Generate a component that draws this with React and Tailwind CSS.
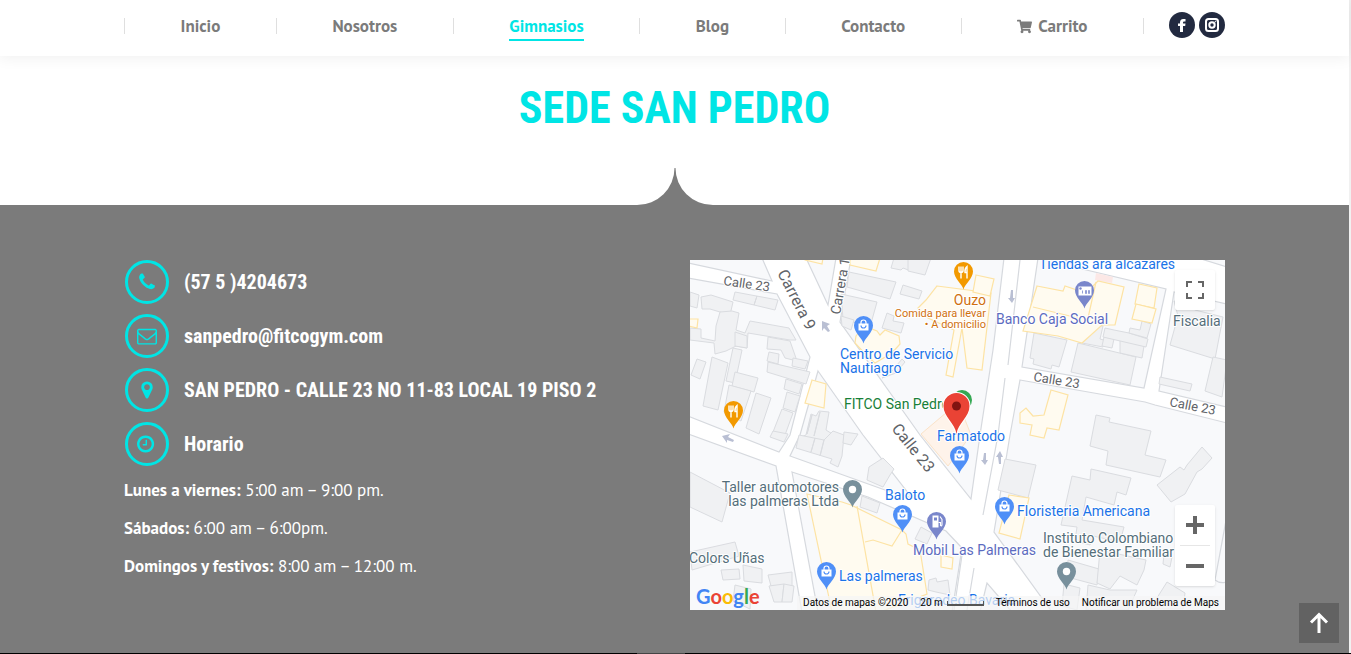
import React from "react";
import { FaShoppingCart } from "react-icons/fa";

const NAV = ["Inicio", "Nosotros", "Gimnasios", "Blog", "Contacto", "Carrito"];

const ICONS = {
  phone:
    "M1600 1240q0 27-10 70.500t-21 68.500q-21 50-122 106-94 51-186 51-27 0-53-3.500t-57.500-12.500-47-14.500-55.500-20.500-49-18q-98-35-175-83-127-79-264-216t-216-264q-48-77-83-175-3-9-18-49t-20.500-55.500-14.500-47-12.500-57.500-3.500-53q0-92 51-186 56-101 106-122 25-11 68.500-21t70.500-10q14 0 21 3 18 6 53 76 11 19 30 54t35 63.500 31 53.500q3 4 17.500 25t21.500 35.500 7 28.500q0 20-28.500 50t-62 55-62 53-28.500 46q0 9 5 22.500t8.500 20.500 14 24 11.500 19q76 137 174 235t235 174q2 1 19 11.500t24 14 20.500 8.500 22.500 5q18 0 46-28.500t53-62 55-62 50-28.500q14 0 28.500 7t35.500 21.500 25 17.500q25 15 53.500 31t63.500 35 54 30q70 35 76 53 3 7 3 21z",
  mail:
    "M1664 1504v-768q-32 36-69 66-268 206-426 338-51 43-83 67t-86.500 48.500-102.500 24.500h-2q-48 0-102.500-24.500t-86.500-48.500-83-67q-158-132-426-338-37-30-69-66v768q0 13 9.500 22.500t22.500 9.500h1472q13 0 22.500-9.500t9.500-22.500zm0-1051v-24.500l-.5-13-3-12.500-5.500-9-9-7.500-14-2.500h-1472q-13 0-22.500 9.500t-9.500 22.500q0 168 147 284 193 152 401 317 6 5 35 29.500t46 37.500 44.500 31.500 50.500 27.500 43 9h2q20 0 43-9t50.500-27.500 44.500-31.500 46-37.500 35-29.500q208-165 401-317 54-43 100.500-115.500t46.500-131.500zm128-37v1088q0 66-47 113t-113 47h-1472q-66 0-113-47t-47-113v-1088q0-66 47-113t113-47h1472q66 0 113 47t47 113z",
  marker:
    "M1152 640q0-106-75-181t-181-75-181 75-75 181 75 181 181 75 181-75 75-181zm256 0q0 109-33 179l-364 774q-16 33-47.500 52t-67.500 19-67.500-19-46.500-52l-365-774q-33-70-33-179 0-212 150-362t362-150 362 150 150 362z",
  clock:
    "M1024 544v448q0 14-9 23t-23 9h-320q-14 0-23-9t-9-23v-64q0-14 9-23t23-9h224v-352q0-14 9-23t23-9h64q14 0 23 9t9 23zm416 352q0-148-73-273t-198-198-273-73-273 73-198 198-73 273 73 273 198 198 273 73 273-73 198-198 73-273zm224 0q0 209-103 385.500t-279.500 279.500-385.500 103-385.500-103-279.500-279.500-103-385.500 103-385.500 279.500-279.500 385.500-103 385.500 103 279.500 279.500 103 385.500z",
};

const CONTACT = [
  ["phone", "(57 5 )4204673"],
  ["mail", "sanpedro@fitcogym.com"],
  ["marker", "SAN PEDRO - CALLE 23 NO 11-83 LOCAL 19 PISO 2"],
  ["clock", "Horario"],
];

const HOURS = [
  ["Lunes a viernes:", "5:00 am – 9:00 pm."],
  ["Sábados:", "6:00 am – 6:00pm."],
  ["Domingos y festivos:", "8:00 am – 12:00 m."],
];

// City blocks; the white base between them forms the streets.
const BLOCKS = [
  "-2,-2 -2,3 82,21 72,-2",
  "-2,18 87,34 120,97 100,175 89,192 -2,156",
  "128,111 173,175 222,238 195,230 100,196 110,175",
  "116,-2 138,45 146,-2",
  "161,-2 150,62 230,175 281,239 290,175 303,90 314,-2",
  "348,-2 332,107 454,128 476,29 388,8 372,-2",
  "484,32 469,131 537,147 537,44",
  "508,-2 537,7 537,-2",
  "330,120 455,142 465,145 537,163 537,352 362,352 304,272 320,175",
  "-2,174 86,206 112,352 -2,352",
  "102,212 178,237 256,271 272,288 262,352 128,352",
  "297,323 290,352 322,352",
];

const GRAY = [
  "0,32 9,35 7,48 0,46", "11,37 21,35 43,42 40,55 20,49 12,49",
  "45,32 88,40 85,50 43,40", "67,36 64,45",
  "26,66 30,52 42,51 49,53 46,70 55,73 60,61 99,68 106,80 100,80 58,73 57,88 46,86 36,91 25,94 24,83 0,80 0,68 11,69 11,78 25,81",
  "45,72 57,76 57,88 45,86", "78,77 100,81 107,101 95,98 91,90 77,89", "79,92 89,94 88,104 77,101",
  "7,99 16,102 10,119 1,115", "22,97 38,103 28,150 13,146", "43,88 52,90 45,123 36,121",
  "78,102 120,112 116,124 77,112", "96,119 112,124 109,134 94,129", "103,98 118,101 115,109 102,106",
  "45,112 68,118 64,132 42,126", "39,125 61,131 51,161 34,152", "66,133 81,138 69,174 56,168",
  "97,132 110,136 105,152 93,148", "92,149 103,153 95,175 83,172",
  "159,12 206,22 200,39 157,27", "151,34 187,42 180,67 153,59", "151,56 164,60 161,70 152,66",
  "197,53 204,56 203,61 214,63 211,73 192,68", "213,25 232,31 229,39 210,34", "204,-2 224,-2 221,11 213,8 211,10 201,8", "218,-2 241,-2 235,15 218,11",
  "202,111 212,99 215,102 206,113 192,118",
  "116,175 121,154 126,156 129,151 139,152 136,170 144,175 140,189 108,178",
  "122,155 117,174", "130,152 124,176",
  "143,171 154,175 152,196 148,207 140,203 142,199 106,188 109,175 134,180",
  "125,178 121,192", "134,180 130,196", "154,172 168,174 161,185 153,183",
  "83,171 98,174 94,182 80,177", "193,198 204,209 200,215 193,227 177,220 179,207",
  "172,236 190,243 187,253 170,247", "231,267 242,273 237,284 225,279",
  "0,212 40,233 32,262 0,247", "0,292 45,282 49,296 2,310", "31,310 49,309 50,319 33,320", "53,305 72,309 72,323 54,321",
  "78,315 102,312 102,326 81,326", "79,326 94,324 92,342 84,342", "94,324 104,326 102,342 92,342", "45,325 61,329 60,349 43,341",
  "141,337 182,325 190,352 142,352", "239,320 246,318 247,322 258,320 260,335 246,332 238,330",
  "344,73 377,80 369,107 362,105 361,109 343,104 344,99 340,98",
  "399,65 413,66 410,79 417,81 413,87 392,83", "388,83 446,97 440,125 381,112",
  "414,77 424,79 422,88 412,86", "430,80 454,86 452,98 430,93", "413,77 456,87 458,79 439,73 424,70 415,68", "452,61 461,64 457,78 439,73 440,68 450,70",
  "484,41 500,46 505,50 533,57 525,99 480,85 488,56", "470,117 502,124 500,131 469,124", "523,97 537,100 532,137 515,131",
  "406,155 420,158 419,162 461,171 455,195 476,200 470,217 416,205 418,191 400,186",
  "315,199 346,205 338,238 308,230",
  "382,216 400,220 401,209 441,218 436,235 427,232 424,245 396,237 392,260 434,267 430,282 403,276 400,285 385,281 387,267 371,265",
  "512,187 522,198 512,209 507,212 495,234 481,242 467,225 490,207 494,210 497,205",
  "378,300 409,309 407,325 377,317", "410,290 456,300 454,310 447,325 430,316 420,329 407,323",
  "374,324 390,328 387,350 372,346", "398,325 420,330 447,330 438,350 396,350", "477,322 495,333 493,349 460,349",
  "474,294 482,297 480,307 473,304",
];

const YELLOW = [
  "114,-2 133,-2 132,4 115,0", "160,-2 190,-2 186,11 160,5", "-2,59 8,59 7,68 -2,66",
  "122,120 136,124 134,148 115,143", "166,76 174,66 187,71 190,75 195,70 209,76 210,84 202,93 185,103 178,97 165,83",
  "247,26 301,33 292,110 277,108 272,68 263,117 256,115 264,70 238,58 228,48 236,40", "286,15 304,19 300,36 283,32",
  "347,26 373,31 375,26 396,33 408,21 434,27 425,65 412,65 392,83 368,76 333,71",
  "449,24 467,28 464,48 445,44", "446,44 466,49 462,63 442,59",
  "361,130 378,135 369,170 357,168 354,178 340,175 342,165 330,163 330,153 336,148 343,156 354,155",
  "319,235 339,238 330,279 309,273", "117,234 152,242 161,245 212,270 216,274 218,284 230,290 237,334 190,352 142,352 138,333",
  "251,295 263,298 262,309 251,307",
];

const BLUE = "#1a73e8";
const SLATE = "#546e7a";
const ORANGE = "#d0700e";
const STREET = "#5f6368";

const PINS = [
  [173, 83, "#4f8ff7", "bag"], [273, 29, "#f29900", "fork"], [394, 48, "#7986cb", "card"],
  [43, 168, "#f29900", "fork"], [269, 213, "#4f8ff7", "bag"], [162, 247, "#78909c", "dot"],
  [212, 272, "#4f8ff7", "bag"], [246, 279, "#7986cb", "fuel"], [314, 264, "#4f8ff7", "bag"],
  [376, 329, "#78909c", "dot"], [136, 329, "#4f8ff7", "bag"],
];

function Pin({ x, y, color, kind }) {
  return (
    <g transform={`translate(${x + 0.5} ${y + 0.5})`}>
      <path d="M0 0C-1-5-9.500-11-9.500-18A9.500 9.500 0 1 1 9.500-18C9.500-11 1-5 0 0Z" fill={color} />
      {kind === "dot" && <circle cy="-18" r="3.700" fill="#fff" />}
      {kind === "bag" && (
        <g>
          <path d="M-5-20H5V-13H-5Z" fill="#fff" />
          <path d="M-2.500-19v-2a2.500 2.500 0 0 1 5 0v2" fill="none" stroke="#fff" strokeWidth="1.200" />
          <path d="M-2.500-18a2.500 2.500 0 0 0 5 0" fill="none" stroke={color} strokeWidth="1.200" />
        </g>
      )}
      {kind === "fork" && (
        <path d="M-4.500-23v4q0 2 2 2v6M-2.500-23v6M-.5-23v4q0 2-2 2M3.500-11v-12q-2.500 2-2 6h2" fill="none" stroke="#fff" strokeWidth="1.400" />
      )}
      {kind === "card" && (
        <g>
          <path d="M-6-22H7V-13H-6Z" fill="#fff" />
          <circle cx="-4" cy="-20" r="1.200" fill={color} />
          <path d="M-2-18v3M1-18h1v3h-1zM4-18h1v3h-1z" fill="none" stroke={color} strokeWidth=".8" />
        </g>
      )}
      {kind === "fuel" && (
        <g>
          <path d="M-4-24H2V-12H-4Z" fill="#fff" />
          <path d="M-2.500-22H.5v3h-3z" fill={color} />
          <path d="M2-17h2v3q1.500 1 1.500-1v-5l-2-3" fill="none" stroke="#fff" strokeWidth="1.100" />
        </g>
      )}
    </g>
  );
}

function Label({ x, y, fill = BLUE, size = 14, anchor = "start", rotate = 0, children }) {
  return (
    <text
      transform={`translate(${x} ${y}) rotate(${rotate})`}
      fill={fill}
      fontSize={size}
      textAnchor={anchor}
      stroke="#fff"
      strokeWidth="2"
      strokeLinejoin="round"
      paintOrder="stroke"
    >
      {children}
    </text>
  );
}

function StreetMap() {
  return (
    <svg
      className="block h-full w-full font-['Roboto',sans-serif]"
      viewBox="0 0 535 350"
      preserveAspectRatio="xMidYMid slice"
      role="img"
      aria-label="Mapa de FITCO San Pedro"
    >
      <rect width="535" height="350" fill="#fff" />
      <g fill="#f8f9fb" stroke="#d6d9de" strokeWidth="1.200">
        {BLOCKS.map((p) => <polygon key={p} points={p} />)}
      </g>
      <g fill="#f0f1f3" stroke="#dadce0">
        {GRAY.map((p) => <polygon key={p} points={p} />)}
      </g>
      <polygon points="406,13 423,17 422,23 405,20" fill="#fce8e6" />
      <polygon points="257,152 231,174 258,206 281,175 272,152" fill="#fef3ea" stroke="#fbe3c8" />
      <g fill="#fffbf0" stroke="#fde3a4" strokeWidth="1.200">
        {YELLOW.map((p) => <polygon key={p} points={p} />)}
        <path d="M167 246 186 352M175 282 183 280 202 286 212 270M343 47 388 58M398 58 406 22" fill="none" />
      </g>
      <path
        d="M330 0 318 105M315 118 308 175 293 255M272 295 264 350M284 308 277 350M537 255 525 320q5 4 12 2"
        fill="none"
        stroke="#d6d9de"
        strokeWidth="1.200"
      />
      <g fill="#b9bfd3">
        <path d="M132 61 140 64 137 66 140 71 138 72 134 68 132 71Z" />
        <path d="M321 30h2v8h2l-3 5-4-5h2z" />
        <path d="M32 176 40 174 38 177 44 180 43 182 37 180 37 183Z" />
        <path d="M294 193h2v7h2l-3 5-4-5h2zM309 204h2v-7h2l-3-6-4 6h2z" />
      </g>

      <Label x="33" y="25" fill={STREET} size={13} rotate={8}>Calle 23</Label>
      <Label x="87" y="13" fill={STREET} size={16} rotate={63}>Carrera 9</Label>
      <Label x="150" y="55" fill={STREET} rotate={-80}>Carrera 11</Label>
      <Label x="343" y="121" fill={STREET} size={13} rotate={9}>Calle 23</Label>
      <Label x="479" y="146" fill={STREET} size={13} rotate={11}>Calle 23</Label>
      <Label x="201" y="169" fill={STREET} size={16} rotate={51}>Calle 23</Label>

      {PINS.map(([x, y, color, kind]) => <Pin key={`${x}-${y}`} x={x} y={y} color={color} kind={kind} />)}

      <Label x="349" y="9">Tiendas ara alcázares</Label>
      <Label x="296" y="45" fill={ORANGE} anchor="end">Ouzo</Label>
      <Label x="296" y="57" fill={ORANGE} size={11} anchor="end">Comida para llevar</Label>
      <Label x="296" y="68" fill={ORANGE} size={11} anchor="end">• A domicilio</Label>
      <Label x="306" y="64" fill="#5c6bc0">Banco Caja Social</Label>
      <Label x="483" y="66" fill={SLATE}>Fiscalia</Label>
      <Label x="150" y="99">Centro de Servicio</Label>
      <Label x="150" y="113">Nautiagro</Label>
      <Label x="154" y="149" fill="#188038">FITCO San Pedro</Label>
      <Label x="247" y="181">Farmatodo</Label>
      <Label x="195" y="240">Baloto</Label>
      <Label x="149" y="232" fill={SLATE} anchor="end">Taller automotores</Label>
      <Label x="149" y="246" fill={SLATE} anchor="end">las palmeras Ltda</Label>
      <Label x="327" y="256">Floristeria Americana</Label>
      <Label x="223" y="295" fill="#5c6bc0">Mobil Las Palmeras</Label>
      <Label x="353" y="283" fill={SLATE}>Instituto Colombiano</Label>
      <Label x="353" y="297" fill={SLATE}>de Bienestar Familiar</Label>
      <Label x="-1" y="303" fill={SLATE}>Colors Uñas</Label>
      <Label x="149" y="321">Las palmeras</Label>
      <Label x="208" y="345">Frigorodeo Bavaria</Label>

      <circle cx="272" cy="140" r="10" fill="#34a853" />
      <path
        d="M266.500 174C265 163 253.500 157 253.500 146A13 13 0 1 1 279.500 146C279.500 157 268 163 266.500 174Z"
        fill="#ea4335"
        stroke="#fff"
        strokeWidth="2"
        paintOrder="stroke"
      />
      <circle cx="266.500" cy="146" r="4.500" fill="#811411" />
    </svg>
  );
}

function MapPanel() {
  return (
    <div className="relative h-[350px] min-w-0 overflow-hidden">
      <StreetMap />
      <a href="#google" className="absolute bottom-0 left-[6px] font-['Lato',sans-serif] text-[20px] leading-[28px] font-bold">
        <span className="text-[#4285f4]">G</span>
        <span className="text-[#ea4335]">o</span>
        <span className="text-[#fbbc05]">o</span>
        <span className="text-[#4285f4]">g</span>
        <span className="text-[#34a853]">l</span>
        <span className="text-[#ea4335]">e</span>
      </a>
      <div className="absolute right-0 bottom-0 flex h-[14px] items-center gap-[12px] bg-[#f5f5f5]/70 pr-[6px] pl-[6px] font-['Roboto',sans-serif] text-[10px] leading-[14px] whitespace-nowrap text-black">
        <span>Datos de mapas ©2020</span>
        <button type="button" className="flex items-center gap-[4px]">
          20 m
          <span className="h-[5px] w-[37px] border-x border-b-2 border-[#555]" />
        </button>
        <a href="#terminos">Términos de uso</a>
        <a href="#problema">Notificar un problema de Maps</a>
      </div>
      <button type="button" aria-label="Pantalla completa" className="absolute top-[10px] right-[10px] grid size-[40px] place-items-center rounded-xs bg-white shadow-sm">
        <svg viewBox="0 0 18 18" className="size-[18px]" fill="none" stroke="#666" strokeWidth="2">
          <path d="M1 6V1h5M12 1h5v5M17 12v5h-5M6 17H1v-5" />
        </svg>
      </button>
      <div className="absolute right-[10px] bottom-[24px] flex w-[40px] flex-col rounded-xs bg-white px-[5px] shadow-sm">
        <button type="button" aria-label="Acercar" className="grid h-[40px] place-items-center">
          <svg viewBox="0 0 18 18" className="size-[18px]" stroke="#666" strokeWidth="4"><path d="M9 0v18M0 9h18" /></svg>
        </button>
        <span className="h-px bg-[#e6e6e6]" />
        <button type="button" aria-label="Alejar" className="grid h-[40px] place-items-center">
          <svg viewBox="0 0 18 18" className="size-[18px]" stroke="#666" strokeWidth="4"><path d="M0 9h18" /></svg>
        </button>
      </div>
    </div>
  );
}

export default function App() {
  return (
    <div className="flex min-h-screen flex-col bg-white font-['PT_Sans','Noto_Sans',sans-serif]">
      <div className="flex flex-1 flex-col border-r-2 border-[#f1f1f1]">
        <header className="h-[56px] shadow-[0_0_15px_1px_rgba(0,0,0,0.07)]">
          <div className="mx-auto flex max-w-[1101px] items-start">
            <nav className="mt-[18px] flex h-[16px] flex-auto border-l border-[#dfdfdf]">
              {NAV.map((item) => (
                <a
                  key={item}
                  href={`#${item.toLowerCase()}`}
                  className="flex h-[16px] flex-auto items-center justify-center border-r border-[#dfdfdf] text-[17px] leading-[24px] font-bold text-[#7b7b7b]"
                >
                  {item === "Gimnasios" ? (
                    <span className="relative text-[#00e5e5] after:absolute after:inset-x-0 after:-bottom-[3px] after:h-[2px] after:bg-[#00e5e5]">{item}</span>
                  ) : (
                    <span className="flex items-center gap-[6px]">
                      {item === "Carrito" && <FaShoppingCart className="size-[15px]" />}
                      {item}
                    </span>
                  )}
                </a>
              ))}
            </nav>
            <div className="mt-[12px] ml-[25px] flex gap-[4px]">
              <a href="#facebook" aria-label="Facebook" className="grid size-[26px] place-items-center rounded-full bg-[#222a40] text-white">
                <svg viewBox="0 0 8 13" className="h-[13px] w-[8px]" fill="currentColor">
                  <path d="M2 13V7H0V4.500H2V3.500Q2 0 5.200 0H7.500V2.500H6Q5 2.500 5 3.500V4.500H7.500L7.200 7H5V13Z" />
                </svg>
              </a>
              <a href="#instagram" aria-label="Instagram" className="grid size-[26px] place-items-center rounded-full bg-[#222a40] text-white">
                <svg viewBox="0 0 14 14" className="size-[14px]" fill="none" stroke="currentColor" strokeWidth="2">
                  <rect x="1" y="1" width="12" height="12" rx="2.500" />
                  <circle cx="7" cy="7" r="2.700" />
                  <circle cx="10.500" cy="3.500" r=".4" strokeWidth="1" />
                </svg>
              </a>
            </div>
          </div>
        </header>

        <main className="flex flex-1 flex-col">
          <section className="flex flex-col items-center pt-[26px]">
            <h1 className="font-['Roboto_Condensed','Roboto',sans-serif] text-[44px] leading-[52px] font-bold text-[#00e5e5]">SEDE SAN PEDRO</h1>
            <svg viewBox="0 0 76 37" className="mt-[34px] h-[37px] w-[76px]" fill="#7b7b7b" aria-hidden="true">
              <path d="M37.500 0H38.500A37.500 37 0 0 0 76 37H0A37.500 37 0 0 0 37.500 0Z" />
            </svg>
          </section>

          <section className="flex-1 bg-[#7b7b7b] pt-[55px] pb-[43px]">
            <div className="mx-auto grid max-w-[1101px] grid-cols-[minmax(0,1fr)_minmax(0,1fr)] gap-[31px] text-white">
              <div className="flex flex-col gap-[10px]">
                {CONTACT.map(([icon, text]) => (
                  <div key={icon} className="flex items-center gap-[15px] pl-px">
                    <span className="grid size-[44px] shrink-0 place-items-center rounded-full border-3 border-[#00e5e5]">
                      <svg
                        viewBox={icon === "clock" ? "128 0 1792 1792" : "0 0 1792 1792"}
                        className="size-[20px] overflow-visible"
                        fill="#00e5e5"
                        aria-hidden="true"
                      >
                        <path d={ICONS[icon]} />
                      </svg>
                    </span>
                    <h2 className="font-['Roboto_Condensed','Roboto',sans-serif] text-[20px] leading-[24px] font-bold whitespace-nowrap">{text}</h2>
                  </div>
                ))}
                {HOURS.map(([day, time]) => (
                  <p key={day} className="text-[17px] leading-[28px]">
                    <strong>{day}</strong> {time}
                  </p>
                ))}
              </div>
              <MapPanel />
            </div>
          </section>
        </main>
      </div>
      <div className="flex h-px justify-center bg-black">
        <span className="w-[48px] -translate-x-[15px] bg-[#444]" />
      </div>
      <a href="#top" aria-label="Volver arriba" className="fixed right-[12px] bottom-[11px] grid size-[40px] place-items-center bg-[#626262]">
        <svg viewBox="0 0 20 22" className="h-[22px] w-[20px]" fill="none" stroke="#fff" strokeWidth="3">
          <path d="M10 21V2M2 10.500l8-8 8 8" />
        </svg>
      </a>
    </div>
  );
}
